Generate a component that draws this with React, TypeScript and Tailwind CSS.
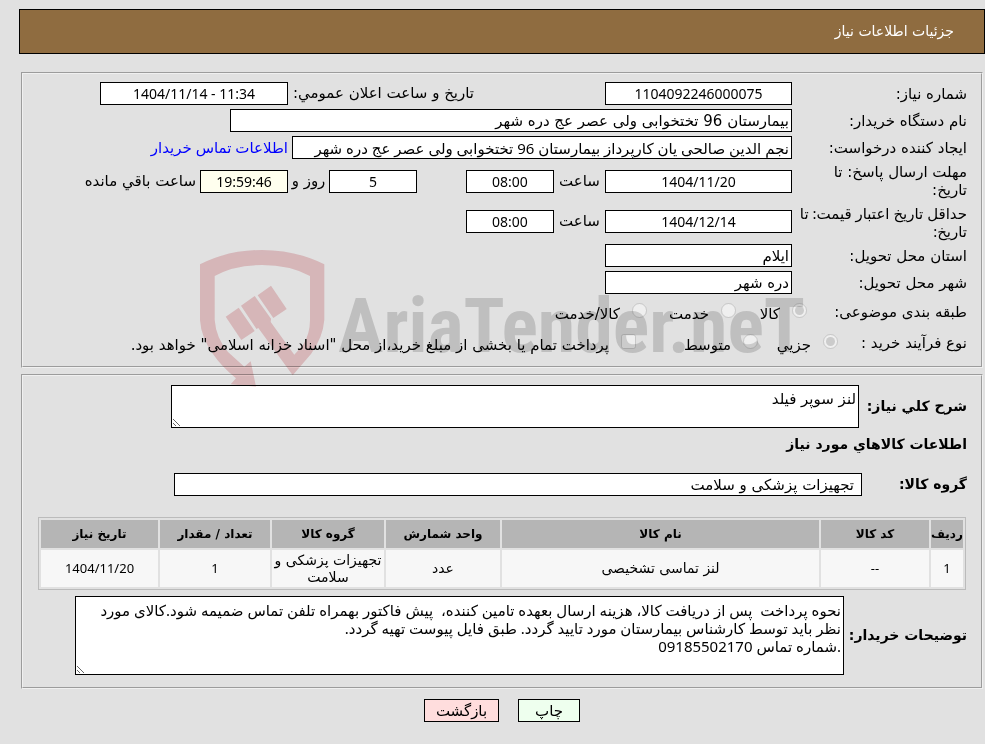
import type { ReactNode } from "react";

const box = "h-[23px] border border-black bg-white px-[2px] text-black";
const numberBox =
  "h-[23px] border border-black px-[2px] text-center text-[14px] text-black [font-family:'Noto_Sans','DejaVu_Sans',sans-serif]";
const mixedText = "[font-family:'Noto_Sans','DejaVu_Sans',sans-serif]";
const panel = "min-w-0 border-2 border-[#f0f0f0] [border-style:groove]";

const columns = [
  { title: "ردیف", width: "w-[32px]", value: "1", numeric: true },
  { title: "کد کالا", width: "w-[108px]", value: "--", numeric: true },
  { title: "نام کالا", width: "", value: "لنز تماسی تشخیصی" },
  { title: "واحد شمارش", width: "w-[114px]", value: "عدد" },
  { title: "گروه کالا", width: "w-[112px]", value: "تجهیزات پزشکی و سلامت" },
  { title: "تعداد / مقدار", width: "w-[110px]", value: "1", numeric: true },
  { title: "تاریخ نیاز", width: "w-[117px]", value: "1404/11/20", numeric: true },
];

const notes = `نحوه پرداخت  پس از دریافت کالا، هزینه ارسال بعهده تامین کننده،  پیش فاکتور بهمراه تلفن تماس ضمیمه شود.کالای مورد نظر باید توسط کارشناس بیمارستان مورد تایید گردد. طبق فایل پیوست تهیه گردد.
.شماره تماس 09185502170`;

function Row({ id, label, children }: { id: string; label: string; children: ReactNode }) {
  return (
    <div className="flex min-h-[27px] items-center">
      <label htmlFor={id} className="w-[175px] shrink-0 leading-[18px]">
        {label}
      </label>
      {children}
    </div>
  );
}

function Watermark() {
  return (
    <svg
      className="pointer-events-none absolute left-[173px] top-[172px] h-[144px] w-[620px] mix-blend-multiply"
      viewBox="196 246 620 144"
      aria-hidden="true"
    >
      <g fill="#c0101c" opacity="0.2">
        <path d="M200 264.3Q228 250 262 250Q296 250 324.3 264.3V320Q323 337 311 354L292.7 375.3L258.3 328L256.5 329L241 305.7L254.7 296L271 318.7L270.7 322L294.3 354.7L303 345Q310 334 310 320V276Q290 265 262 265Q234 265 214.7 276V320Q216 338 228 352L244.3 366.7L250.7 361.3L256 386.7L230.7 384.3L236 378.3Q221 366 213 354Q201 337 200 320Z" />
        <path d="M225.7 316.7L238.7 307.7L254.7 331L241.3 340Z" />
        <path d="M257.7 295.3L271 285.7L286.7 309L273.3 318Z" />
      </g>
      <text
        x="338"
        y="352"
        fill="#000"
        opacity="0.15"
        direction="ltr"
        className="text-[76px] font-bold [font-family:'Roboto_Condensed','Roboto',sans-serif]"
      >
        AriaTender.neT
      </text>
    </svg>
  );
}

export default function App() {
  return (
    <div
      dir="rtl"
      className="min-h-screen bg-[#e1e1e1] pt-[9px] text-[15px] text-black [font-family:'DejaVu_Sans',sans-serif]"
    >
      <header className="ml-[19px] flex h-[45px] items-center border border-black bg-[#8f6c40] px-[30px]">
        <h1 className="text-[14px] text-white">جزئیات اطلاعات نیاز</h1>
      </header>

      <main className="ml-[21px] mr-[2px] mt-[18px]">
        {/* مشخصات نیاز */}
        <fieldset className={`${panel} relative px-[14px] pb-[9px] pt-[6px]`}>
          <Row id="number" label="شماره نیاز:">
            <input id="number" readOnly defaultValue="1104092246000075" className={`${numberBox} w-[187px] bg-white`} />
            <label htmlFor="announced" className="mr-[131px] w-[186px] whitespace-nowrap">
              تاریخ و ساعت اعلان عمومي:
            </label>
            <input id="announced" readOnly dir="ltr" defaultValue="1404/11/14 - 11:34" className={`${numberBox} w-[188px] bg-white`} />
          </Row>
          <Row id="buyer" label="نام دستگاه خریدار:">
            <input id="buyer" readOnly defaultValue="بیمارستان 96 تختخوابی ولی عصر عج دره شهر" className={`${box} w-[562px]`} />
          </Row>
          <Row id="creator" label="ایجاد کننده درخواست:">
            <input id="creator" readOnly defaultValue="نجم الدین صالحی یان کارپرداز بیمارستان 96 تختخوابی ولی عصر عج دره شهر" className={`${box} ${mixedText} w-[500px]`} />
            <a href="#contact" className={`${mixedText} mr-1 text-[#0000ff]`}>
              اطلاعات تماس خریدار
            </a>
          </Row>
          <div className="flex h-10 items-center">
            <label htmlFor="deadline" className="w-[175px] shrink-0 pl-8 leading-[18px]">
              مهلت ارسال پاسخ: تا تاریخ:
            </label>
            <input id="deadline" readOnly defaultValue="1404/11/20" className={`${numberBox} w-[187px] bg-white`} />
            <label htmlFor="deadline-time" className="w-[51px] text-center">ساعت</label>
            <input id="deadline-time" readOnly defaultValue="08:00" className={`${numberBox} w-[88px] bg-white`} />
            <input id="days" readOnly defaultValue="5" className={`${numberBox} mr-[49px] w-[88px] bg-white`} />
            <label htmlFor="days" className="w-[41px] whitespace-nowrap text-center">روز و</label>
            <input id="remaining" readOnly defaultValue="19:59:46" className={`${numberBox} w-[88px] bg-[#ffffee]`} />
            <label htmlFor="remaining" className="mr-1">ساعت باقي مانده</label>
          </div>
          <div className="flex h-[41px] items-center">
            <label htmlFor="validity" className={`${mixedText} w-[175px] shrink-0 leading-[18px]`}>
              حداقل تاریخ اعتبار قیمت: تا تاریخ:
            </label>
            <input id="validity" readOnly defaultValue="1404/12/14" className={`${numberBox} w-[187px] bg-white`} />
            <label htmlFor="validity-time" className="w-[51px] text-center">ساعت</label>
            <input id="validity-time" readOnly defaultValue="08:00" className={`${numberBox} w-[88px] bg-white`} />
          </div>
          <Row id="province" label="استان محل تحویل:">
            <input id="province" readOnly defaultValue="ایلام" className={`${box} w-[187px]`} />
          </Row>
          <Row id="city" label="شهر محل تحویل:">
            <input id="city" readOnly defaultValue="دره شهر" className={`${box} w-[187px]`} />
          </Row>

          <div className="flex h-[33px] items-center">
            <span className="w-[160px]">طبقه بندی موضوعی:</span>
            <label className="flex w-[71px] items-center gap-3">
              <input type="radio" name="subject" disabled defaultChecked className="mb-1 size-[15px]" />
              <span className="pt-1">کالا</span>
            </label>
            <label className="flex w-[89px] items-center gap-3">
              <input type="radio" name="subject" disabled className="mb-1 size-[15px]" />
              <span className="pt-1">خدمت</span>
            </label>
            <label className="flex items-center gap-3">
              <input type="radio" name="subject" disabled className="mb-1 size-[15px]" />
              <span className="pt-1">کالا/خدمت</span>
            </label>
          </div>
          <div className="flex h-7 items-center">
            <span className="w-[129px]">نوع فرآیند خرید :</span>
            <label className="flex w-[80px] items-center gap-3">
              <input type="radio" name="process" disabled defaultChecked className="mb-1 size-[15px]" />
              <span className="pt-1">جزیي</span>
            </label>
            <label className="flex w-[122px] items-center gap-3">
              <input type="radio" name="process" disabled className="mb-1 size-[15px]" />
              <span className="pt-1">متوسط</span>
            </label>
            <label className="flex items-center gap-3 whitespace-nowrap">
              <input type="checkbox" disabled className="mb-1 size-[15px]" />
              <span className="pt-1">پرداخت تمام یا بخشی از مبلغ خرید،از محل "اسناد خزانه اسلامی" خواهد بود.</span>
            </label>
          </div>
          <Watermark />
        </fieldset>

        {/* شرح کالا */}
        <fieldset className={`${panel} mt-[6px] px-[14px] pb-[12px] pt-[9px]`}>
          <div className="flex items-center">
            <label htmlFor="summary" className="w-[108px] shrink-0 whitespace-nowrap text-[14px] font-bold">شرح کلي نیاز:</label>
            <textarea id="summary" readOnly defaultValue="لنز سوپر فیلد" className="block h-[43px] w-[688px] border border-black bg-white px-[2px] py-[4px] leading-[18px]" />
          </div>
          <h2 className="mt-1 text-[14px] leading-6 font-bold">اطلاعات کالاهاي مورد نیاز</h2>
          <div className="mt-[17px] flex items-center">
            <label htmlFor="group" className="w-[105px] shrink-0 text-[14px] font-bold">گروه کالا:</label>
            <input id="group" readOnly defaultValue="تجهیزات پزشکی و سلامت" className="h-[23px] w-[688px] border border-black bg-white px-[7px]" />
          </div>

          <div className="ml-px mr-px mt-[21px]">
            <table className="w-full table-fixed border-separate border-spacing-[2px] border border-[#bbbbbb] text-center">
              <thead>
                <tr className="h-7 bg-[#b5b5b5]">
                  {columns.map((c) => (
                    <th key={c.title} className={`${c.width} whitespace-nowrap text-[12px] font-bold`}>
                      {c.title}
                    </th>
                  ))}
                </tr>
              </thead>
              <tbody>
                <tr className="h-[37px] bg-[#f7f7f7]">
                  {columns.map((c) => (
                    <td
                      key={c.title}
                      className={c.numeric ? `${mixedText} text-[13px] leading-[17px]` : "text-[14px] leading-[17px]"}
                    >
                      {c.value}
                    </td>
                  ))}
                </tr>
              </tbody>
            </table>
          </div>

          <div className="mt-[6px] flex items-center">
            <label htmlFor="notes" className="w-[123px] shrink-0 whitespace-nowrap text-[14px] font-bold">توضیحات خریدار:</label>
            <textarea id="notes" readOnly defaultValue={notes} className={`${mixedText} block h-[79px] w-[769px] border border-black bg-white px-[2px] py-[4px] leading-[18px]`} />
          </div>
        </fieldset>

        <div className="mt-[10px] flex justify-center gap-[19px]">
          <button className="h-[23px] w-[62px] border border-black bg-[#eeffee]">چاپ</button>
          <button className="h-[23px] w-[75px] border border-black bg-[#ffdddd]">بازگشت</button>
        </div>
      </main>
    </div>
  );
}
